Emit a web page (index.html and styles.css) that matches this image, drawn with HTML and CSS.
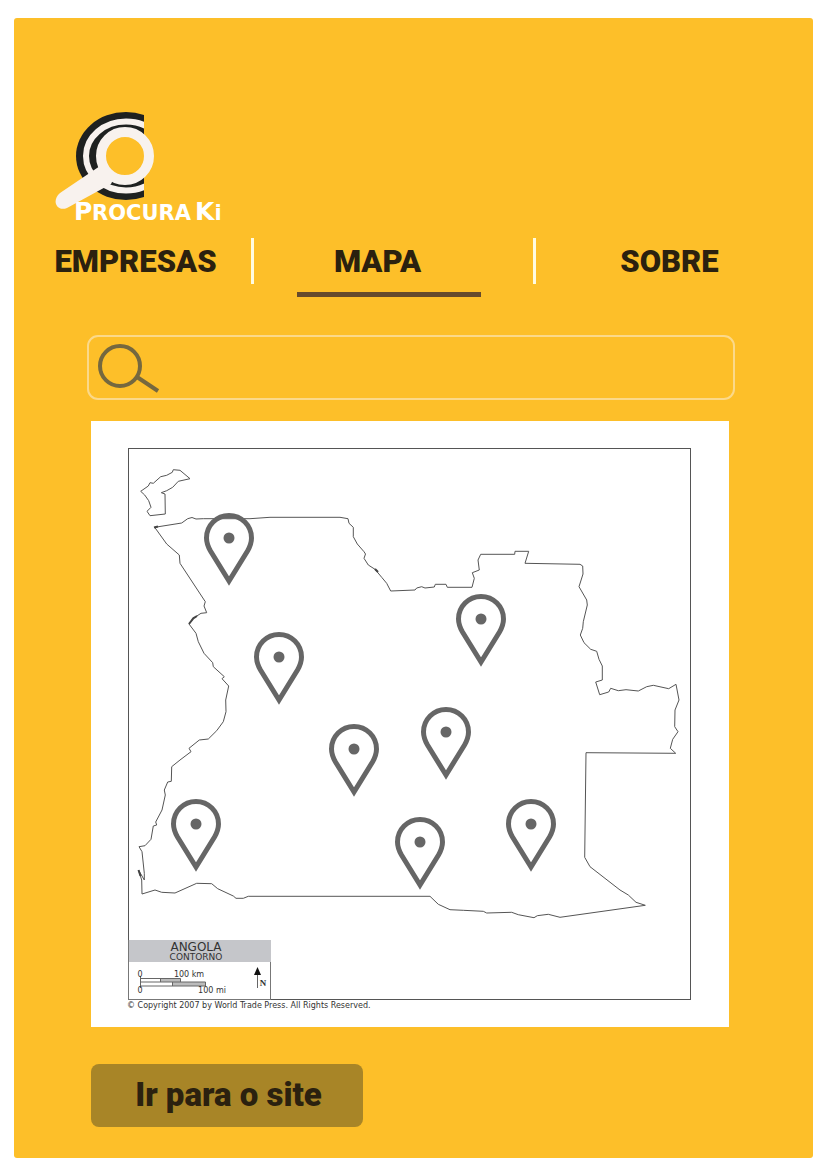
FILE: index.html
```html
<!DOCTYPE html>
<html lang="pt">
<head>
<meta charset="utf-8">
<meta name="viewport" content="width=device-width, initial-scale=1">
<title>ProcuraKi</title>
<link rel="stylesheet" href="styles.css">
</head>
<body>
<div class="panel">
  <header class="header">
    <svg class="logo" viewBox="0 0 180 120" role="img" aria-label="ProcuraKi">
      <defs>
        <clipPath id="logo-cut"><rect width="92" height="120"/></clipPath>
      </defs>
      <g clip-path="url(#logo-cut)">
        <ellipse class="logo-dark" cx="74" cy="46" rx="50" ry="44"/>
        <ellipse class="logo-ring" cx="74" cy="46" rx="40" ry="34.500"/>
      </g>
      <circle class="logo-lens" cx="73" cy="46" r="24"/>
      <path class="logo-handle" d="M48 56L8 83C-1 91 5 102 15 98L59 74L63 66L50 52Z"/>
      <text class="logo-text" y="110"><tspan class="logo-big" x="22">P</tspan><tspan class="logo-small" x="40">ROCURA</tspan><tspan class="logo-big" x="143">K</tspan><tspan class="logo-small">i</tspan></text>
    </svg>
  </header>

  <nav class="nav" aria-label="Principal">
    <div class="nav-item nav-item-first"><a class="nav-link" href="#empresas">EMPRESAS</a></div>
    <div class="nav-item nav-item-middle"><a class="nav-link nav-link-active" href="#mapa" aria-current="page">MAPA</a></div>
    <div class="nav-item nav-item-last"><a class="nav-link" href="#sobre">SOBRE</a></div>
  </nav>

  <main class="content">
    <form class="search" role="search">
      <label class="search-label" for="q" aria-label="Procurar">
        <svg class="search-icon" viewBox="0 0 64 52" aria-hidden="true">
          <circle cx="22" cy="24" r="20"/>
          <path d="M39 35L60 49"/>
        </svg>
      </label>
      <input class="search-input" id="q" type="search">
    </form>

    <section class="map-card" id="mapa" aria-label="Mapa de Angola">
      <svg class="map" viewBox="91 421 638 606">
        <defs>
          <g id="pin">
            <path class="pin-body" d="M0 43L-18.500 13Q-22.500 6-22.500 0A22.500 22.500 0 0 1 22.500 0Q22.500 6 18.500 13Z"/>
            <circle class="pin-dot" r="5.500"/>
          </g>
        </defs>
        <rect class="frame" x="128.500" y="448.500" width="562" height="551"/>
        <path class="border-line" d="M140.700 491.300L148.300 486L150 482.700L153.300 483.300L160.700 476.700L166.700 475.300L172.300 472.300L173.300 469.700L180 470.300L190 478.700L178.300 481.300L172.700 487.300L166.700 490.700L161.300 492.700L165 494L165.300 514L150 515.700L147 511.300L151 507.300L148.700 500.700L144.700 495Z"/>
        <path class="border-line" d="M154.700 527.300L181.700 523L187.700 518.700L192 517.500L196 519L203.300 518.700L250 518.700L270 517.300L340 517.300L348 518.700L349 523.300L353.300 527.300L353.300 536.700L357.300 544L364 551.700L365.500 554L364 558.300L368.300 565L375 569.300L381.700 577.300L386.700 583.300L390.700 591L415 590L416.700 588L421.700 586.700L425 588L434.300 587L435.300 584.300L446 584.300L447.300 587.300L472 587.300L474.300 578.300L472.300 572.700L479.300 570L478 560L480.700 554.300L514.700 554.300L515 551.300L528.700 551.300L525 563.300L580 564.300L582.700 566L583 574L579 586.700L586.700 600L587.300 605L583.300 621.700L582.700 628.300L580.300 635L584 642.700L590.700 649.300L596.700 651.300L599 659.300L602.300 666L602.300 680L595.700 682L599.700 694.700L608.700 692L610.700 688.300L618.300 690.700L626 689.700L638.300 691L646.700 686.700L653.300 685.300L668.700 688.700L676 684.300L679 700L675 710L674.700 726.700L678 731.700L672.700 739.300L670.300 748.300L675.700 753.300L586 752.700L584.700 857.300L590 866.700L620 890L628.300 895L636 902.300L645.300 905.300L560 917.300L548.300 914.300L537.300 915.700L534 917.700L518.300 914.700L511.700 912.300L486.700 913L483.300 911.300L463.300 910.300L450 909.700L438.300 904.300L430 896.300L248.300 896.300L243.300 898.300L236 898.300L233.300 896L217.700 888.700L211.700 883.700L196.700 883.300L175 893L161.700 892.300L155 890L142 894L141.700 880L138.500 870L144.300 880L144.300 873.300L142 851.700L139 846.700L145 845.700L151 839.300L153.300 826L156.700 825L155.700 822L162 810L165.300 795L164.300 790L167.700 782L171.300 781.300L171.700 766.700L180 760L191 751.700L189 748.300L199.300 740L208.300 739L216.700 730.700L223.300 721.700L226 711.700L225.700 700L228.700 686L222 678.700L224.300 676.700L213.300 666.700L212.700 662.700L204 653.300L198.300 641.700L196 633.300L189 624L193.300 618.300L201 613.300L206.700 612.700L204 606L205.300 601.700L180 563.300L179.300 555L166.700 544Z"/>
        <path class="border-accent" d="M189 624L193.300 618.300L197 616M154 527.500L158 526.500M375 569L378 572M138.500 870L140.500 876"/>

        <rect class="legend-box" x="128.500" y="940.500" width="142" height="59"/>
        <rect class="legend-head" x="129" y="940" width="142" height="22"/>
        <text class="legend-title" x="196" y="951">ANGOLA</text>
        <text class="legend-subtitle" x="196" y="960">CONTORNO</text>
        <path class="scale-fill" d="M160 978.500H180.500V982H160ZM172 982H205.500V986H172Z"/>
        <path class="scale-line" d="M140.500 976V988M140.500 978.500H180.500V982M140.500 982H205.500V986H140.500M160.500 978.500V982M172.500 982V986"/>
        <text class="legend-small" x="140" y="977">0</text>
        <text class="legend-small" x="189" y="977">100 km</text>
        <text class="legend-small" x="140" y="993">0</text>
        <text class="legend-small" x="212" y="993">100 mi</text>
        <path class="north-line" d="M257.500 974V988"/>
        <path class="north-head" d="M257.500 967L261 975H254Z"/>
        <text class="north-text" x="263" y="986">N</text>
        <text class="copyright" x="127" y="1008">© Copyright 2007 by World Trade Press. All Rights Reserved.</text>

        <use href="#pin" x="229" y="538"/>
        <use href="#pin" x="279" y="657"/>
        <use href="#pin" x="481" y="619"/>
        <use href="#pin" x="446" y="732"/>
        <use href="#pin" x="354" y="749"/>
        <use href="#pin" x="196" y="824"/>
        <use href="#pin" x="420" y="842"/>
        <use href="#pin" x="531" y="824"/>
      </svg>
    </section>

    <button class="site-button" type="button">Ir para o site</button>
  </main>
</div>
</body>
</html>
```
FILE: styles.css
```css
* {
  box-sizing: border-box;
}

body {
  margin: 18px 13px 11px 14px;
  background: #fff;
  font-family: Roboto, "Liberation Sans", sans-serif;
  color: #2b210f;
}

.panel {
  padding-bottom: 31px;
  border-radius: 3px;
  background: #fdbf29;
}

.header {
  padding: 92px 40px 0 38px;
}

.logo {
  display: block;
  width: 180px;
  height: 120px;
}

.logo-dark {
  fill: #1f2120;
}

.logo-ring {
  fill: none;
  stroke: #f8f2ee;
  stroke-width: 6;
}

.logo-lens {
  fill: #fdbf29;
  stroke: #f8f2ee;
  stroke-width: 10;
}

.logo-handle {
  fill: #f8f2ee;
}

.logo-text {
  fill: #fff;
  font-family: "DejaVu Sans", sans-serif;
  font-weight: 700;
}

.logo-big {
  font-size: 25px;
}

.logo-small {
  font-size: 21px;
}

.nav {
  display: grid;
  grid-template-columns: 237fr 285fr 277fr;
  align-items: start;
  padding-top: 8px;
}

.nav-item {
  display: flex;
  justify-content: center;
  height: 46px;
}

.nav-item-first {
  padding-left: 6px;
}

.nav-item-middle {
  padding-right: 10px;
  border-right: 3px solid #fffbe0;
  border-left: 3px solid #fffbe0;
}

.nav-item-last {
  padding-right: 10px;
}

.nav-link {
  height: 59px;
  color: inherit;
  font-size: 31px;
  font-weight: 900;
  line-height: 48px;
  text-align: center;
  text-decoration: none;
}

.nav-link-active {
  width: 184px;
  padding-right: 22px;
  border-bottom: 5px solid #664a2c;
}

.content {
  padding: 51px 78px 0 73px;
}

.search {
  display: flex;
  align-items: center;
  height: 65px;
  padding: 0 9px;
  border: 2px solid #fbd98a;
  border-radius: 11px;
}

.search-label {
  display: flex;
}

.search-icon {
  width: 64px;
  height: 52px;
  fill: none;
  stroke: #75683f;
  stroke-width: 4;
}

.search-input {
  flex: 1;
  min-width: 0;
  height: 48px;
  border: 0;
  outline: 0;
  background: transparent;
  color: inherit;
  font: 700 24px Roboto, "Liberation Sans", sans-serif;
}

.map-card {
  margin: 21px 6px 0 4px;
  background: #fff;
}

.map {
  display: block;
  width: 100%;
}

.frame {
  fill: none;
  stroke: #555;
}

.border-line {
  fill: none;
  stroke: #555;
  stroke-linejoin: round;
}

.border-accent {
  fill: none;
  stroke: #444;
  stroke-width: 2;
}

.pin-body {
  fill: none;
  stroke: #666;
  stroke-width: 5;
}

.pin-dot {
  fill: #666;
}

.legend-box {
  fill: #fff;
  stroke: #777;
}

.legend-head {
  fill: #c5c6ca;
}

.map text {
  fill: #333;
  font-family: "DejaVu Sans", sans-serif;
}

.map .legend-title {
  font-size: 12px;
  text-anchor: middle;
}

.map .legend-subtitle {
  font-size: 9px;
  text-anchor: middle;
}

.map .legend-small {
  font-size: 8px;
  text-anchor: middle;
}

.map .north-text {
  font-family: "Liberation Serif", serif;
  font-size: 9px;
  font-weight: 700;
  text-anchor: middle;
}

.map .copyright {
  font-size: 8px;
}

.scale-fill {
  fill: #bbb;
}

.scale-line,
.north-line {
  fill: none;
  stroke: #666;
}

.north-head {
  fill: #111;
}

.site-button {
  display: block;
  width: 272px;
  height: 63px;
  margin: 37px 0 0 4px;
  padding: 0 0 2px 3px;
  border: 0;
  border-radius: 8px;
  background: #a88527;
  color: inherit;
  font: 900 33px Roboto, "Liberation Sans", sans-serif;
}
```
